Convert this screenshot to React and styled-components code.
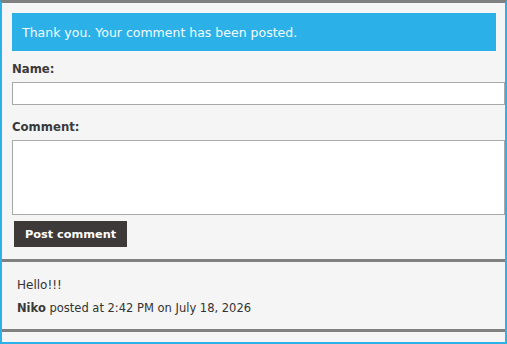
import styled, { createGlobalStyle } from 'styled-components';

const GlobalStyle = createGlobalStyle`
  html, body {
    margin: 0;
    padding: 0;
    background: #f5f5f5;
  }
  body {
    font-family: "DejaVu Sans", Verdana, sans-serif;
    color: #333;
  }
`;

const Frame = styled.div`
  width: 507px;
  height: 344px;
  box-sizing: border-box;
  background: #f5f5f5;
  border: 2px solid #2cb2e8;
  border-top: 3px solid #808080;
  overflow: hidden;
`;

const Form = styled.form`
  padding: 10px 9px 0 10px;
  display: flex;
  flex-direction: column;
`;

const Notice = styled.div`
  height: 38px;
  background: #2bb1e8;
  color: #f4fbff;
  font-size: 12.5px;
  display: flex;
  align-items: center;
  padding-left: 10px;
`;

const Label = styled.label`
  display: block;
  font-weight: bold;
  font-size: 11.7px;
  line-height: 14px;
  color: #3a3a3a;
  margin-top: ${(p) => p.$top}px;
  margin-bottom: 6px;
`;

const Field = styled.input`
  box-sizing: border-box;
  width: calc(100% + 9px);
  height: 23px;
  border: 1px solid #a9a9a9;
  background: #fff;
  margin: 0;
`;

const Area = styled.textarea`
  box-sizing: border-box;
  width: calc(100% + 9px);
  height: 75px;
  border: 1px solid #a9a9a9;
  background: #fff;
  margin: 0;
  resize: none;
`;

const Button = styled.button`
  align-self: flex-start;
  margin: 6px 0 0 2px;
  width: 113px;
  height: 26px;
  border: none;
  background: #3e3a3a;
  color: #fff;
  font-family: "DejaVu Sans", Verdana, sans-serif;
  font-weight: bold;
  font-size: 11.3px;
  padding: 0;
`;

const Comment = styled.div`
  margin-top: 12px;
  border-top: 3px solid #808080;
  border-bottom: 3px solid #808080;
  padding: 16px 15px 0;
  height: 51px;
  box-sizing: content-box;
`;

const Body = styled.p`
  margin: 0;
  font-size: 12px;
  line-height: 14px;
  color: #333;
`;

const Meta = styled.p`
  margin: 9px 0 0;
  font-size: 11.5px;
  line-height: 14px;
  color: #333;
  b {
    color: #3a3a3a;
  }
`;

export default function App() {
  return (
    <>
      <GlobalStyle />
      <Frame>
        <Form onSubmit={(e) => e.preventDefault()}>
          <Notice>Thank you. Your comment has been posted.</Notice>
          <Label $top={11}>Name:</Label>
          <Field type="text" />
          <Label $top={15}>Comment:</Label>
          <Area />
          <Button type="submit">Post comment</Button>
        </Form>
        <Comment>
          <Body>Hello!!!</Body>
          <Meta>
            <b>Niko</b> posted at 2:42 PM on July 18, 2026
          </Meta>
        </Comment>
      </Frame>
    </>
  );
}
